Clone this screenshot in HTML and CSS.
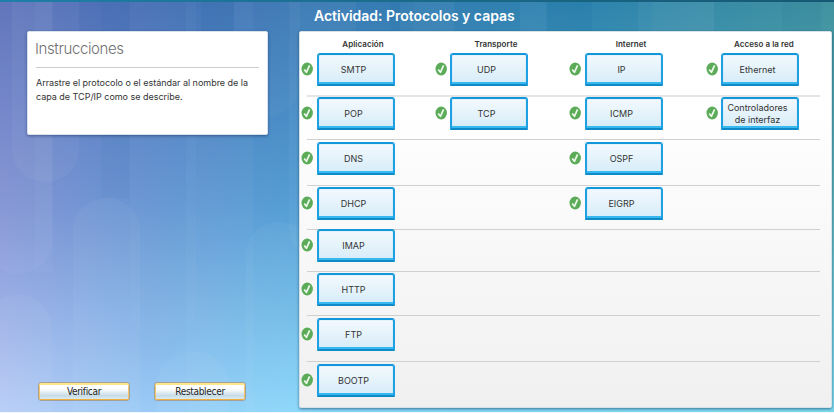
FILE: index.html
```html
<!DOCTYPE html>
<html lang="es">
<head>
<meta charset="utf-8">
<title>Actividad: Protocolos y capas</title>
<link rel="stylesheet" href="styles.css">
</head>
<body>
<div class="app">
  <svg class="backdrop" viewBox="0 0 834 412" preserveAspectRatio="none" aria-hidden="true">
    <defs>
      <linearGradient id="top"><stop offset="0" stop-color="#5c70b9"/><stop offset=".25" stop-color="#4071b4"/><stop offset=".36" stop-color="#3a78b4"/><stop offset=".7" stop-color="#2c83ae"/><stop offset="1" stop-color="#41929f"/></linearGradient>
      <linearGradient id="mid"><stop offset="0" stop-color="#8494d5"/><stop offset=".18" stop-color="#6897d3"/><stop offset=".35" stop-color="#559fd5"/><stop offset="1" stop-color="#62b4bd"/></linearGradient>
      <linearGradient id="low"><stop offset="0" stop-color="#b8cdf7"/><stop offset=".18" stop-color="#9bcbf6"/><stop offset=".36" stop-color="#8ad8fa"/><stop offset="1" stop-color="#7ddaf0"/></linearGradient>
      <linearGradient id="f1" x2="0" y2="1"><stop stop-color="#fff" offset="0"/><stop stop-color="#fff" stop-opacity="0" offset=".5"/></linearGradient>
      <linearGradient id="f2" x2="0" y2="1"><stop stop-color="#fff" stop-opacity="0" offset=".5"/><stop stop-color="#fff" offset="1"/></linearGradient>
      <mask id="m1"><rect width="834" height="412" fill="url(#f1)"/></mask>
      <mask id="m2"><rect width="834" height="412" fill="url(#f2)"/></mask>
    </defs>
    <rect width="834" height="412" fill="url(#mid)"/>
    <rect width="834" height="412" fill="url(#top)" mask="url(#m1)"/>
    <rect width="834" height="412" fill="url(#low)" mask="url(#m2)"/>
    <g fill="#fff" fill-opacity=".04">
      <rect x="12" y="-60" width="67" height="241" rx="33"/>
      <rect x="-15" y="-60" width="67" height="333" rx="33"/>
      <rect x="35" y="-20" width="18" height="292" fill-opacity=".03"/>
      <rect x="73" y="197" width="67" height="280" rx="33"/>
      <rect x="130" y="-40" width="66" height="380" rx="33" fill-opacity=".025"/>
      <rect x="186" y="-40" width="67" height="480" fill-opacity=".03"/>
      <rect x="-15" y="294" width="67" height="180" rx="33"/>
      <rect x="157" y="351" width="72" height="120" rx="34"/>
      <rect x="246" y="221" width="67" height="260" rx="33"/>
      <rect x="234" y="-60" width="66" height="175" rx="33" fill-opacity=".03"/>
      <rect x="289" y="-60" width="67" height="320" rx="33"/>
      <rect x="400" y="-20" width="54" height="80"/>
      <rect x="520" y="-20" width="27" height="80"/>
      <rect x="638" y="-20" width="14" height="80"/>
      <rect x="652" y="-20" width="62" height="80" fill-opacity=".06"/>
    </g>
    <g fill="#00508c" fill-opacity=".06">
      <rect x="101" y="0" width="28" height="197" fill-opacity=".035"/>
      <rect x="201" y="0" width="33" height="32"/>
      <rect x="390" y="0" width="24" height="32"/>
      <rect x="546" y="0" width="46" height="32"/>
      <rect x="782" y="0" width="39" height="32"/>
    </g>
  </svg>
  <svg class="defs" aria-hidden="true"><symbol id="ok" viewBox="0 0 12 14"><ellipse cx="6.2" cy="7" rx="5.7" ry="6.4" fill="#5bab58"/><path d="M3.2 7.4 5.4 10.3 8.6 3.4" fill="none" stroke="#eef9ec" stroke-width="1.7" stroke-linejoin="round"/></symbol></svg>

  <aside class="side">
    <section class="card">
      <h2>Instrucciones</h2>
      <p>Arrastre el protocolo o el estándar al nombre de la<br>capa de TCP/IP como se describe.</p>
    </section>
    <div class="actions">
      <button>Verificar</button>
      <button>Restablecer</button>
    </div>
  </aside>

  <main class="main">
    <h1>Actividad: Protocolos y capas</h1>
    <div class="board">
      <div class="head"><span>Aplicación</span><span>Transporte</span><span>Internet</span><span class="last">Acceso a la red</span></div>
      <div class="row r1">
        <div class="item"><svg><use href="#ok"/></svg><b>SMTP</b></div>
        <div class="item second"><svg><use href="#ok"/></svg><b>UDP</b></div>
        <div class="item"><svg><use href="#ok"/></svg><b>IP</b></div>
        <div class="item fourth"><svg><use href="#ok"/></svg><b>Ethernet</b></div>
      </div>
      <div class="row r2">
        <div class="item"><svg><use href="#ok"/></svg><b>POP</b></div>
        <div class="item second"><svg><use href="#ok"/></svg><b>TCP</b></div>
        <div class="item"><svg><use href="#ok"/></svg><b>ICMP</b></div>
        <div class="item fourth"><svg><use href="#ok"/></svg><b>Controladores<br>de interfaz</b></div>
      </div>
      <div class="row r3">
        <div class="item"><svg><use href="#ok"/></svg><b>DNS</b></div>
        <div class="item third"><svg><use href="#ok"/></svg><b>OSPF</b></div>
      </div>
      <div class="row r4">
        <div class="item"><svg><use href="#ok"/></svg><b>DHCP</b></div>
        <div class="item third"><svg><use href="#ok"/></svg><b>EIGRP</b></div>
      </div>
      <div class="row r5"><div class="item"><svg><use href="#ok"/></svg><b>IMAP</b></div></div>
      <div class="row r6"><div class="item"><svg><use href="#ok"/></svg><b>HTTP</b></div></div>
      <div class="row r7"><div class="item"><svg><use href="#ok"/></svg><b>FTP</b></div></div>
      <div class="row r8"><div class="item"><svg><use href="#ok"/></svg><b>BOOTP</b></div></div>
    </div>
  </main>
</div>
</body>
</html>
```
FILE: styles.css
```css
* { box-sizing: border-box; }
body { margin: 0; background: #f2f8fd; font-family: Inter, "Liberation Sans", sans-serif; color: #333; overflow: hidden; }
h1, h2, p { margin: 0; }
.app { position: relative; width: 834px; height: 412px; display: flex; border-style: solid; border-image: linear-gradient(90deg, #1f7fa8, #1a6a8a 50%, #165873) 1; border-width: 2px 0 0; overflow: hidden; }
.backdrop { position: absolute; left: 0; top: 0; width: 100%; height: 100%; z-index: -1; }
.defs { position: absolute; width: 0; height: 0; }
.side { width: 299px; padding: 29px 0 0 27px; display: flex; flex-direction: column; justify-content: space-between; }
.card { width: 241px; height: 104px; padding: 8px 8px 0; background: #fff; border: 1px solid #d8e1ee; border-radius: 2px; box-shadow: 0 1px 3px rgba(20, 40, 80, .5); }
.card h2 { height: 28px; border-bottom: 1px solid #c9cdd0; font-size: 15px; line-height: 18px; font-weight: 300; color: #707070; letter-spacing: -.38px; text-indent: -1px; }
.card p { padding-top: 8px; font-size: 9px; line-height: 14px; letter-spacing: -.02px; white-space: nowrap; }
.actions { display: flex; gap: 23px; padding: 0 0 11px 11px; }
.actions button { width: 92px; height: 19px; padding: 1px 0 0; border: 1px solid #a5a199; border-radius: 3px; background: linear-gradient(#fff 35%, #c6dce6 75%, #e4f0f4); box-shadow: inset 0 2px 0 #ffe68a, inset 1px 0 0 #f5c467, inset -1px 0 0 #f5c467, inset 0 -1px 0 #f2b13f; font: 10px/16px "DejaVu Sans Condensed", "DejaVu Sans", sans-serif; letter-spacing: -.3px; color: #252525; }
.actions button + button { margin-left: 1px; }
.main { width: 535px; }
.main h1 { height: 29px; padding-left: 15px; color: #fff; font-size: 14px; line-height: 28px; font-weight: 600; letter-spacing: -.01px; white-space: nowrap; }
.board { width: 533px; height: 377px; border: 1px solid #d6e2e8; border-radius: 2px; background: linear-gradient(#fff 20%, #f0f0f0); box-shadow: 0 1px 3px rgba(10, 50, 80, .6); padding-left: 7px; }
.head, .row { width: 513px; display: grid; grid-template-columns: 133px 135px 137px 108px; }
.head { height: 20px; align-items: center; font-size: 8px; line-height: 10px; font-weight: 600; letter-spacing: .05px; white-space: nowrap; padding-top: 3px; }
.head span { width: 112px; text-align: center; }
.head .last { width: 104px; }
.row { height: 44px; border-bottom: 1px solid #d0d0d0; align-items: start; }
.r1 { height: 45px; padding-top: 1px; border-bottom: 2px solid #e5e5e5; }
.r2 { height: 43px; }
.r3 { height: 46px; padding-top: 2px; }
.r4 { padding-top: 1px; }
.r5 { height: 42px; }
.r5 .item { margin-top: -1px; }
.r6 { padding-top: 1px; }
.r7 { height: 46px; padding-top: 2px; }
.r8 { padding-top: 2px; border-bottom: 0; }
.item { display: flex; align-items: flex-start; width: 94px; height: 33px; margin-left: -6px; gap: 4px; }
.second { margin-left: -5px; gap: 3px; }
.third { grid-column: 3; }
.fourth { gap: 3px; }
.item svg { width: 12px; height: 14px; flex: none; margin-top: 9px; }
.item b { width: 78px; height: 33px; flex: none; display: flex; align-items: center; justify-content: center; text-align: center; padding: 1px 5px 1px 0; font-weight: 400; font-size: 9px; line-height: 12px; background: linear-gradient(#f3f9fe, #d6ecf8); border: 2px solid #1fa0e2; border-top-color: #1397dc; border-bottom-color: #0e8ac6; border-radius: 3px 3px 1px 1px; box-shadow: inset 0 0 1px #66c3ee, inset 0 -2px #35b8f0; }
```
